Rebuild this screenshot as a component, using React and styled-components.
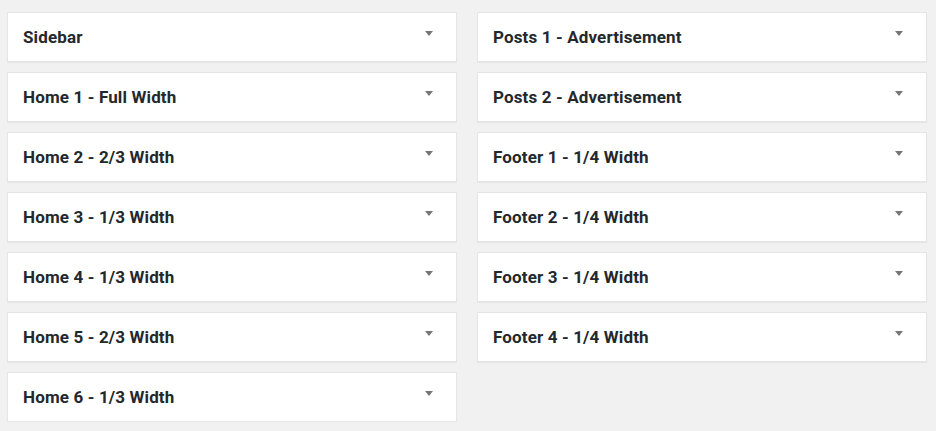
import React from "react";
import styled, { createGlobalStyle } from "styled-components";

const GlobalStyle = createGlobalStyle`
  html, body {
    margin: 0;
    padding: 0;
    background: #f1f1f1;
  }
  body {
    font-family: Roboto, "Liberation Sans", sans-serif;
    color: #23282d;
  }
`;

const Page = styled.div`
  display: flex;
  align-items: flex-start;
  gap: 20px;
  padding: 12px 0 0 7px;
`;

const Column = styled.div`
  display: flex;
  flex-direction: column;
  gap: 10px;
  width: 450px;
`;

const Widget = styled.div`
  box-sizing: border-box;
  height: 50px;
  display: flex;
  align-items: center;
  justify-content: space-between;
  padding: 0 23px 0 15px;
  background: #fff;
  border: 1px solid #e5e5e5;
  box-shadow: 0 1px 1px rgba(0, 0, 0, 0.04);
`;

const Title = styled.h2`
  margin: 0;
  font-size: 17px;
  font-weight: 700;
  letter-spacing: 0.14px;
  line-height: 1;
  color: #23282d;
`;

const Toggle = styled.svg`
  width: 8px;
  height: 5px;
  margin-top: -7px;
  fill: #72777c;
`;

const left = [
  "Sidebar",
  "Home 1 - Full Width",
  "Home 2 - 2/3 Width",
  "Home 3 - 1/3 Width",
  "Home 4 - 1/3 Width",
  "Home 5 - 2/3 Width",
  "Home 6 - 1/3 Width",
];

const right = [
  "Posts 1 - Advertisement",
  "Posts 2 - Advertisement",
  "Footer 1 - 1/4 Width",
  "Footer 2 - 1/4 Width",
  "Footer 3 - 1/4 Width",
  "Footer 4 - 1/4 Width",
];

const Area = ({ name }) => (
  <Widget>
    <Title>{name}</Title>
    <Toggle viewBox="0 0 8 5">
      <polygon points="0,0 8,0 4,5" />
    </Toggle>
  </Widget>
);

const App = () => (
  <>
    <GlobalStyle />
    <Page>
      <Column>
        {left.map(n => <Area key={n} name={n} />)}
      </Column>
      <Column>
        {right.map(n => <Area key={n} name={n} />)}
      </Column>
    </Page>
  </>
);

export default App;
